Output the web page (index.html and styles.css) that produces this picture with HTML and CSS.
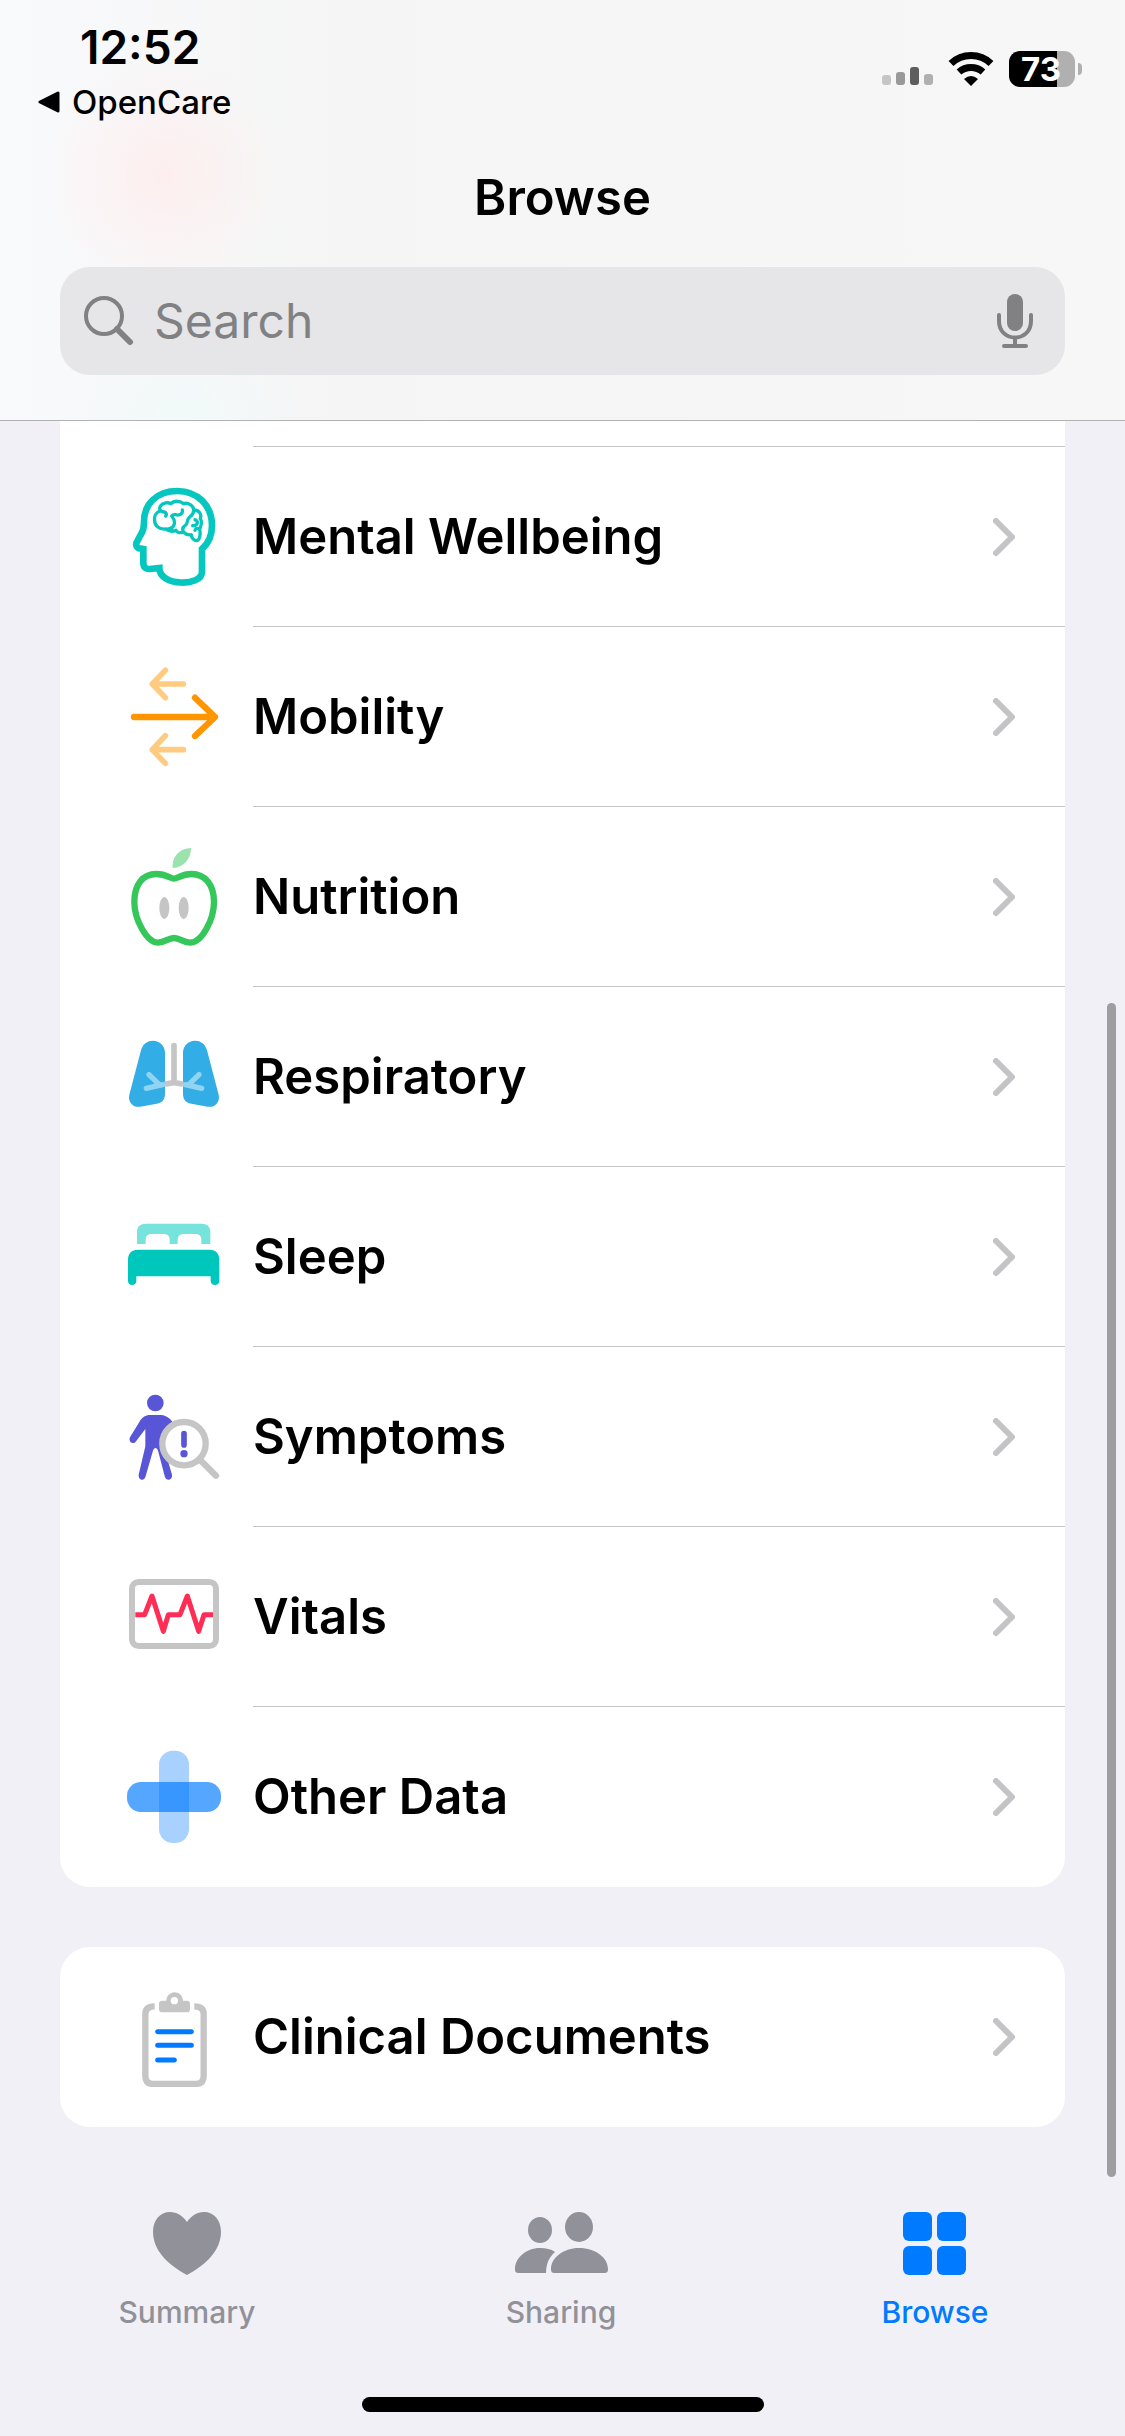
FILE: index.html
```html
<!DOCTYPE html>
<html lang="en">
<head>
<meta charset="utf-8">
<meta name="viewport" content="width=device-width, initial-scale=1">
<title>Browse</title>
<link rel="stylesheet" href="styles.css">
</head>
<body>
<svg width="0" height="0" class="defs" aria-hidden="true">
  <symbol id="chevron" viewBox="0 0 22 38"><path d="M3 3 19 19 3 35" fill="none" stroke="#c4c4c6" stroke-width="6" stroke-linecap="round" stroke-linejoin="round"/></symbol>
</svg>

<header class="header">
  <div class="status">
    <div class="status-left">
      <time class="clock">12:52</time>
      <a class="back" href="#"><svg width="22" height="22" viewBox="0 0 22 22" aria-hidden="true"><path d="M20 2V20L2 11Z" stroke="#000" stroke-width="3" stroke-linejoin="round"/></svg>OpenCare</a>
    </div>
    <div class="status-right">
      <svg width="52" height="36" viewBox="0 0 52 36" aria-hidden="true">
        <rect x="1" y="24" width="9" height="10" rx="3" fill="#c5c5c5"/>
        <rect x="15" y="21" width="9" height="13" rx="3" fill="#999"/>
        <rect x="29" y="16" width="9" height="18" rx="3" fill="#5e5e5e"/>
        <rect x="43" y="23" width="9" height="11" rx="3" fill="#b0b0b0"/>
      </svg>
      <svg width="46" height="36" viewBox="0 0 46 36" aria-hidden="true">
        <path d="M3 12.500A29 29 0 0 1 43 12.500" fill="none" stroke="#000" stroke-width="7"/>
        <path d="M11 21A18 18 0 0 1 35 21" fill="none" stroke="#000" stroke-width="7"/>
        <path d="M16 28Q23 22 30 28L23 35Z"/>
      </svg>
      <div class="battery"><span class="battery-body">73</span><span class="battery-cap"></span></div>
    </div>
  </div>
  <h1 class="title">Browse</h1>
  <div class="search">
    <svg width="50" height="50" viewBox="0 0 50 50" aria-hidden="true"><circle cx="20" cy="20" r="18" fill="none" stroke="#818184" stroke-width="4"/><path d="M33 33 46 46" stroke="#818184" stroke-width="6" stroke-linecap="round"/></svg>
    <input class="search-input" type="search" placeholder="Search" aria-label="Search">
    <button class="mic" type="button" aria-label="Dictate">
      <svg width="36" height="54" viewBox="0 0 36 54"><rect x="10" y="0" width="16" height="37" rx="8" fill="#818184"/><path d="M2 21V27C2 49 34 49 34 27V21M18 44V52M7 52H29" fill="none" stroke="#818184" stroke-width="4" stroke-linecap="round"/></svg>
    </button>
  </div>
</header>

<main class="content">
  <ul class="card card-scrolled">
    <li class="row-tail"></li>
    <li><a class="row" href="#">
      <svg class="icon" viewBox="12 21 300 300" aria-hidden="true" fill="none" stroke="#06c7bf" stroke-linecap="round" stroke-linejoin="round">
        <path stroke-width="20" stroke-linecap="butt" stroke-linejoin="miter" d="M172 33C108 33 72 74 72 126C72 154 66 157 60 168L50 187C46 197 52 206 64 206L70 207V248C70 263 78 268 90 267L118 264C118 320 246 320 246 276V207C265 190 276 166 276 137C276 76 232 33 172 33Z"/>
        <path stroke-width="10" d="M132 96C118 94 116 84 123 76C130 68 144 66 153 71C162 61 182 62 190 71C204 66 221 77 221 90C236 89 246 102 241 116C249 126 242 140 239 148C242 160 240 177 233 181C223 184 214 174 214 164C204 166 196 162 190 156C181 160 171 158 168 151C155 157 145 153 138 147C116 149 103 136 104 120C102 108 109 98 118 94M132 96C139 97 141 104 137 108M155 108C161 115 165 123 163 132C160 143 150 148 138 147M187 90C189 101 180 108 166 104C161 103 158 104 155 108M221 90C222 105 209 109 205 116C200 124 204 133 194 138C188 142 187 149 190 156M225 119C238 125 231 139 218 137M239 148C231 142 226 146 225 151"/>
      </svg>
      <span class="label">Mental Wellbeing</span><svg class="chevron" aria-hidden="true"><use href="#chevron"/></svg></a></li>
    <li><a class="row" href="#">
      <svg class="icon" viewBox="42 621 300 300" aria-hidden="true" fill="none" stroke-linecap="round" stroke-linejoin="round">
        <path stroke="#ffcb80" stroke-width="17" d="M220 672H127M166 631 127 672 166 713M220 869H127M166 827 127 869 166 910"/>
        <path stroke="#ff9500" stroke-width="19" d="M72 771H314M255 713 315 771 255 828"/>
      </svg>
      <span class="label">Mobility</span><svg class="chevron" aria-hidden="true"><use href="#chevron"/></svg></a></li>
    <li><a class="row" href="#">
      <svg class="icon" viewBox="42 81 300 300" aria-hidden="true">
        <path fill="#9be3ad" d="M188 144C185 108 211 85 243 84C243 115 222 143 188 144Z"/>
        <path fill="none" stroke="#35c759" stroke-width="19" d="M192 176C181 176 169 162 139 162C98 162 73 194 73 245C73 298 110 368 144 368C165 368 174 354 192 354C210 354 219 368 240 368C276 368 312 298 312 245C312 194 285 162 244 162C215 162 203 176 192 176Z"/>
        <ellipse cx="163" cy="264" rx="15" ry="33" fill="#c5c5c5"/><ellipse cx="221" cy="264" rx="15" ry="33" fill="#c5c5c5"/>
      </svg>
      <span class="label">Nutrition</span><svg class="chevron" aria-hidden="true"><use href="#chevron"/></svg></a></li>
    <li><a class="row" href="#">
      <svg class="icon" viewBox="42 621 300 300" aria-hidden="true" stroke-linecap="round" stroke-linejoin="round">
        <path fill="#32ade6" d="M93 691C98 672 112 662 129 662C149 662 165 677 165 698V821C165 838 157 848 140 851L91 860C69 864 53 846 58 824ZM291 691C286 672 272 662 255 662C235 662 219 677 219 698V821C219 838 227 848 244 851L293 860C315 864 331 846 326 824Z"/>
        <path fill="none" stroke="#c5c5c5" stroke-width="17" d="M192 677V786"/>
        <path fill="none" stroke="#c5c5c5" stroke-width="17" stroke-linecap="butt" d="M165 793C186 786 198 786 219 793"/>
        <path fill="none" stroke="#8fd4f3" stroke-width="16" d="M109 805 158 794M117 764 148 794M275 805 226 794M267 764 236 794"/>
      </svg>
      <span class="label">Respiratory</span><svg class="chevron" aria-hidden="true"><use href="#chevron"/></svg></a></li>
    <li><a class="row" href="#">
      <svg class="icon" viewBox="42 51 300 300" aria-hidden="true">
        <path fill="#76e3dc" d="M81 162V126C81 109 91 101 108 101H274C291 101 301 109 301 126V162H274V150C274 138 268 132 256 132H222C210 132 203 138 203 150V162H179V150C179 138 173 132 161 132H125C113 132 107 138 107 150V162Z"/>
        <path fill="#00c7bb" d="M54 210C54 190 64 179 84 179H298C318 179 328 190 328 210V273C328 289 302 289 302 273V259H79V273C79 289 54 289 54 273Z"/>
      </svg>
      <span class="label">Sleep</span><svg class="chevron" aria-hidden="true"><use href="#chevron"/></svg></a></li>
    <li><a class="row" href="#">
      <svg class="icon" viewBox="42 591 300 300" aria-hidden="true">
        <circle cx="136" cy="639" r="25" fill="#5856d6"/>
        <path fill="#5856d6" d="M120 675H153C170 676 188 690 192 706L160 765L186 854C188 870 170 875 165 862L145 785C141 770 132 770 128 785L106 862C101 875 84 869 86 854L106 769V717L77 755C68 766 54 754 60 742L88 696C96 682 106 675 120 675Z"/>
        <circle cx="222" cy="761" r="65" fill="#fff" stroke="#c5c5c5" stroke-width="19"/>
        <path d="M273 812 318 857" stroke="#c5c5c5" stroke-width="19" stroke-linecap="round"/>
        <path d="M222 731V765" stroke="#5856d6" stroke-width="17" stroke-linecap="round"/><circle cx="222" cy="791" r="11" fill="#5856d6"/>
      </svg>
      <span class="label">Symptoms</span><svg class="chevron" aria-hidden="true"><use href="#chevron"/></svg></a></li>
    <li><a class="row" href="#">
      <svg class="icon" viewBox="42 51 300 300" aria-hidden="true" fill="none">
        <rect x="66" y="96" width="252" height="192" rx="20" stroke="#c5c5c5" stroke-width="18"/>
        <path stroke="#ff2d55" stroke-width="15" stroke-linejoin="round" d="M76 194H104L126 138 160 244 175 194H210L232 138 266 244 282 194H309"/>
      </svg>
      <span class="label">Vitals</span><svg class="chevron" aria-hidden="true"><use href="#chevron"/></svg></a></li>
    <li><a class="row" href="#">
      <svg class="icon" viewBox="42 591 300 300" aria-hidden="true">
        <rect x="147" y="602" width="90" height="277" rx="42" fill="#a9d1ff"/>
        <rect x="51" y="696" width="282" height="90" rx="42" fill="#007aff" fill-opacity=".67"/>
      </svg>
      <span class="label">Other Data</span><svg class="chevron" aria-hidden="true"><use href="#chevron"/></svg></a></li>
  </ul>

  <ul class="card">
    <li><a class="row" href="#">
      <svg class="icon" viewBox="252 381 300 300" aria-hidden="true" fill="none">
        <path stroke="#c5c5c5" stroke-width="19" d="M344 439C326 439 316 446 316 462V647C316 664 324 672 340 672H467C483 672 491 664 491 647V462C491 446 481 439 463 439"/>
        <path fill="#c5c5c5" fill-rule="evenodd" d="M379 422C381 388 427 388 429 422H440C447 422 450 425 450 432V447C450 454 447 457 440 457H367C360 457 357 454 357 447V432C357 425 360 422 367 422ZM392 422A11 11 0 1 0 414 422A11 11 0 1 0 392 422Z"/>
        <path stroke="#007aff" stroke-width="15" stroke-linecap="round" d="M353 515H454M353 556H454M353 600H403"/>
      </svg>
      <span class="label">Clinical Documents</span><svg class="chevron" aria-hidden="true"><use href="#chevron"/></svg></a></li>
  </ul>
  <div class="scrollbar"></div>
</main>

<nav class="tabs">
  <a class="tab" href="#">
    <svg width="94" height="64" viewBox="0 0 94 64" aria-hidden="true"><path fill="currentColor" d="M47 10C51 4 57 0 64 0C74 0 81 8 81 20C81 38 66 53 47 63C28 53 13 38 13 20C13 8 20 0 30 0C37 0 43 4 47 10Z"/></svg>
    Summary</a>
  <a class="tab" href="#">
    <svg width="94" height="64" viewBox="0 0 94 64" aria-hidden="true" fill="currentColor"><ellipse cx="26" cy="18" rx="12" ry="13"/><ellipse cx="65" cy="15" rx="14" ry="15"/><path d="M5 61C2 61 1 60 1 57C1 46 12 36 26 36C32 36 37 37 41 40C35 45 32 52 32 61ZM41 61C38 61 37 60 37 57C37 46 49 36 65 36C82 36 94 46 94 57C94 60 93 61 90 61Z"/></svg>
    Sharing</a>
  <a class="tab tab-active" href="#" aria-current="page">
    <svg width="94" height="64" viewBox="0 0 94 64" aria-hidden="true" fill="currentColor"><rect x="15" y="0" width="29" height="29" rx="6"/><rect x="49" y="0" width="29" height="29" rx="6"/><rect x="15" y="34" width="29" height="29" rx="6"/><rect x="49" y="34" width="29" height="29" rx="6"/></svg>
    Browse</a>
</nav>
<div class="home"></div>
</body>
</html>
```
FILE: styles.css
```css
* { box-sizing: border-box; }

body {
  margin: 0;
  min-height: 100vh;
  display: flex;
  flex-direction: column;
  background: #f1f0f6;
  color: #000;
  font-family: Inter, "Liberation Sans", sans-serif;
}

a { color: inherit; text-decoration: none; }
ul { margin: 0; padding: 0; list-style: none; }
svg { display: block; flex: none; }
.defs { position: absolute; }

.header {
  display: flex;
  flex-direction: column;
  padding: 20px 60px 45px;
  border-bottom: 1px solid #b2b2b4;
  background:
    radial-gradient(circle at 165px 175px, rgba(255, 236, 236, .8), rgba(255, 240, 240, 0) 120px),
    radial-gradient(circle at 180px 420px, rgba(240, 250, 250, .8), rgba(240, 250, 250, 0) 120px),
    linear-gradient(90deg, #f9fafc, #f5f5f5 30%, #f7f7f7);
}

.status {
  display: flex;
  justify-content: space-between;
  align-items: flex-start;
  margin: 0 -22px;
  height: 104px;
}

.status-left { display: flex; flex-direction: column; }

.clock {
  padding-left: 42px;
  font-size: 46px;
  line-height: 54px;
  font-weight: 600;
}

.back {
  display: flex;
  align-items: center;
  gap: 12px;
  font-size: 33px;
  line-height: 56px;
  font-weight: 500;
}

.status-right {
  display: flex;
  align-items: center;
  gap: 15px;
  padding: 31px 5px 0 0;
}

.battery { display: flex; align-items: center; gap: 3px; }

.battery-body {
  width: 66px;
  padding-right: 2px;
  border-radius: 11px;
  background: linear-gradient(90deg, #000 73%, #b0b0b0 73%);
  color: #fff;
  font-size: 33px;
  line-height: 36px;
  font-weight: 700;
  text-align: center;
}

.battery-cap {
  width: 4px;
  height: 12px;
  border-radius: 0 4px 4px 0;
  background: #b0b0b0;
}

.title {
  margin: 44px 0 39px;
  font-size: 49px;
  line-height: 60px;
  font-weight: 600;
  text-align: center;
}

.search {
  display: flex;
  align-items: center;
  gap: 20px;
  height: 108px;
  padding: 0 32px 0 24px;
  border-radius: 30px;
  background: #e6e6e8;
}

.search-input {
  flex: 1;
  min-width: 0;
  padding: 0;
  border: 0;
  outline: 0;
  background: none;
  color: #000;
  font: 400 48px/60px Inter, "Liberation Sans", sans-serif;
}

.search-input::placeholder { color: #818184; opacity: 1; }

.mic { padding: 0; border: 0; background: none; }

.content {
  position: relative;
  display: flex;
  flex-direction: column;
  gap: 60px;
  padding: 0 60px 50px;
}

.card {
  border-radius: 30px;
  background: #fff;
}

.card-scrolled { border-radius: 0 0 30px 30px; }

.card li { position: relative; }

.card li:not(:last-child)::after {
  content: "";
  position: absolute;
  right: 0;
  bottom: 0;
  left: 193px;
  height: 1px;
  background: #c5c5c7;
}

.row-tail { height: 26px; }

.row {
  display: flex;
  align-items: center;
  height: 180px;
  padding: 0 50px 0 64px;
}

.icon { width: 100px; height: 100px; }

.label {
  flex: 1;
  padding-left: 29px;
  font-size: 49px;
  line-height: 60px;
  font-weight: 600;
}

.chevron { width: 22px; height: 38px; }

.scrollbar {
  position: absolute;
  top: 582px;
  right: 9px;
  bottom: 0;
  width: 9px;
  border-radius: 5px;
  background: #9d9da2;
}

.tabs {
  display: grid;
  grid-template-columns: repeat(3, 1fr);
  margin-top: auto;
  padding: 35px 3px 0 0;
}

.tab {
  display: flex;
  flex-direction: column;
  align-items: center;
  gap: 18px;
  color: #919299;
  font-size: 30px;
  line-height: 36px;
  font-weight: 500;
}

.tab-active { color: #007aff; }

.home {
  align-self: center;
  width: 402px;
  height: 15px;
  margin: 67px 0 24px;
  border-radius: 8px;
  background: #000;
}
```
